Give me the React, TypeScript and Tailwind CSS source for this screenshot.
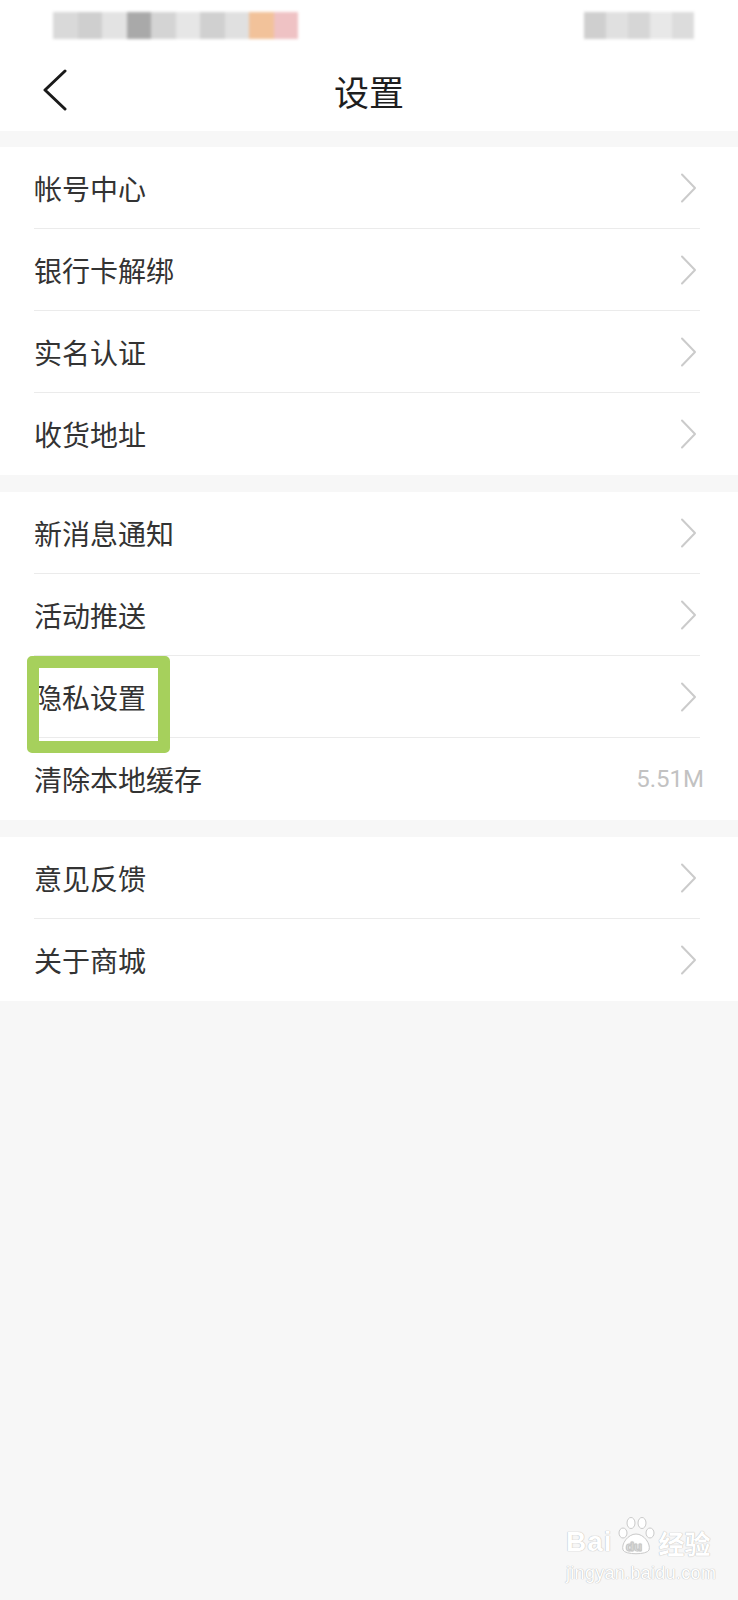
import React from "react";

const FONT = "font-['Noto_Sans_CJK_SC','Noto_Sans',sans-serif]";

type Item = { label: string; value?: string };

const groups: Item[][] = [
  [{ label: "帐号中心" }, { label: "银行卡解绑" }, { label: "实名认证" }, { label: "收货地址" }],
  [{ label: "新消息通知" }, { label: "活动推送" }, { label: "隐私设置" }, { label: "清除本地缓存", value: "5.51M" }],
  [{ label: "意见反馈" }, { label: "关于商城" }],
];

// ─── Icons ──────────────────────────────────────────────────────────

function Chevron() {
  return (
    <svg width="18" height="30" viewBox="0 0 18 30" className="shrink-0 mr-[2px]">
      <polyline points="2,1.5 15,15 2,28.5" fill="none" stroke="#cbcbcb" strokeWidth="2" strokeLinecap="round" strokeLinejoin="round" />
    </svg>
  );
}

function BackArrow() {
  return (
    <svg width="26" height="42" viewBox="0 0 26 42">
      <polyline points="23,2 3,21 23,40" fill="none" stroke="#1a1a1a" strokeWidth="3" strokeLinecap="round" strokeLinejoin="round" />
    </svg>
  );
}

// ─── Status bar (blurred in the original) ──────────────────────────

function StatusBar() {
  const left = ["#d9d9d9", "#cfcfcf", "#e3e3e3", "#a9a9a9", "#d4d4d4", "#e6e6e6", "#d0d0d0", "#e0e0e0", "#f2c29a", "#efc2c4"];
  const right = ["#cfcfcf", "#e0e0e0", "#d6d6d6", "#e8e8e8", "#dcdcdc"];
  return (
    <div className="h-[50px] flex items-center justify-between pl-[53px] pr-[44px]">
      <div className="flex h-[27px] blur-[1.5px]">
        {left.map((c, i) => (
          <div key={i} className="h-full w-[24.5px]" style={{ background: c }} />
        ))}
      </div>
      <div className="flex h-[27px] blur-[1.5px]">
        {right.map((c, i) => (
          <div key={i} className="h-full w-[22px]" style={{ background: c }} />
        ))}
      </div>
    </div>
  );
}

// ─── Row ────────────────────────────────────────────────────────────

function Row({ item, last }: { item: Item; last: boolean }) {
  return (
    <div className="pl-[34px] pr-[38px]">
      <div className={`h-[82px] flex items-center justify-between ${last ? "" : "border-b border-[#ebebeb]"}`}>
        <span className="text-[28px] text-[#333333] leading-none">{item.label}</span>
        {item.value ? (
          <span className="text-[24px] text-[#c2c2c2] font-['Roboto',sans-serif] mr-[-4px]">{item.value}</span>
        ) : (
          <Chevron />
        )}
      </div>
    </div>
  );
}

// ─── Page ───────────────────────────────────────────────────────────

export default function App() {
  return (
    <div className={`relative w-[738px] h-[1600px] bg-[#f7f7f7] overflow-hidden ${FONT}`}>
      <div className="bg-white">
        <StatusBar />
        <div className="relative h-[81px] flex items-center justify-center">
          <div className="absolute left-[42px] top-[19px]">
            <BackArrow />
          </div>
          <span className="text-[35px] text-[#1e1e1e] leading-none">设置</span>
        </div>
      </div>

      <div className="flex flex-col gap-[17px] pt-[16px]">
        {groups.map((g, gi) => (
          <div key={gi} className="bg-white">
            {g.map((item, i) => (
              <Row key={item.label} item={item} last={i === g.length - 1} />
            ))}
          </div>
        ))}
      </div>

      {/* annotation box */}
      <div className="absolute left-[27px] top-[656px] w-[143px] h-[97px] border-[12px] border-[#a6d05c] rounded-[5px]" />

      {/* watermark */}
      <div className="absolute left-[566px] top-[1512px] flex flex-col items-start text-white [text-shadow:0_0_1px_#bdbdbd,0_0_1px_#bdbdbd]">
        <div className="flex items-end h-[44px]">
          <span className="font-['Liberation_Sans',sans-serif] font-bold text-[28px] leading-none tracking-[1px]">Bai</span>
          <svg width="44" height="42" viewBox="0 0 44 42" className="mx-[1px]">
            <g fill="#ffffff" stroke="#c9c9c9" strokeWidth="1">
              <ellipse cx="9" cy="19" rx="4" ry="5" />
              <ellipse cx="17" cy="9" rx="4" ry="5.5" />
              <ellipse cx="28" cy="9" rx="4" ry="5.5" />
              <ellipse cx="36" cy="19" rx="4" ry="5" />
              <path d="M22 20 C14 20 7 30 9 36 C11 41 33 41 35 36 C37 30 30 20 22 20 Z" />
            </g>
            <text x="12" y="37" fontSize="13" fill="#ffffff" stroke="#c9c9c9" strokeWidth="0.6" fontFamily="Liberation Sans, sans-serif" fontWeight="bold">du</text>
          </svg>
          <span className="text-[26px] leading-none font-bold">经验</span>
        </div>
        <span className="font-['Liberation_Sans',sans-serif] text-[18px] leading-none mt-[8px] tracking-[0.3px]">jingyan.baidu.com</span>
      </div>
    </div>
  );
}
